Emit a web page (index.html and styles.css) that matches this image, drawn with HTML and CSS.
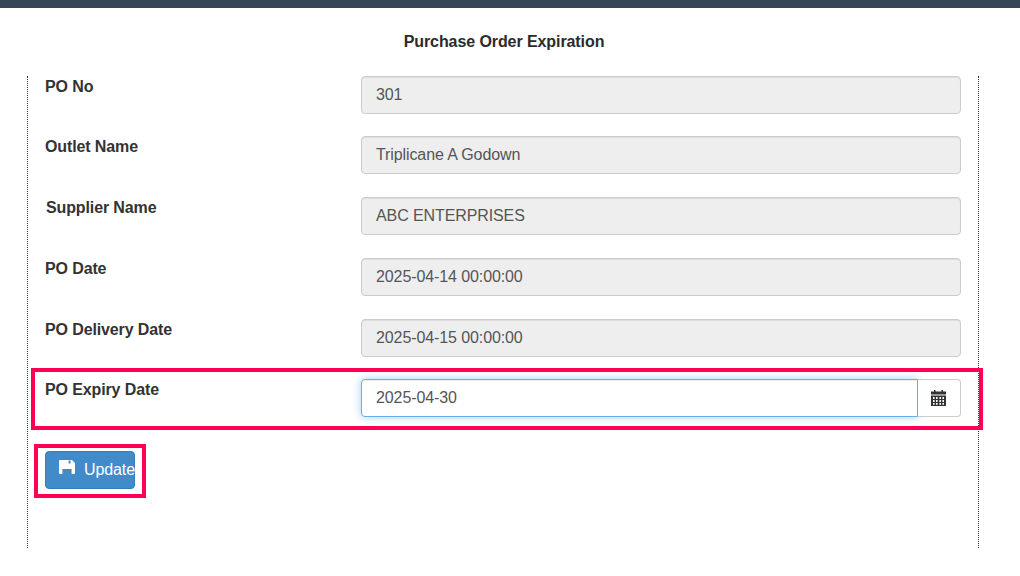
FILE: index.html
```html
<!DOCTYPE html>
<html lang="en">
<head>
<meta charset="utf-8">
<title>Purchase Order Expiration</title>
<link rel="stylesheet" href="styles.css">
</head>
<body>
<div class="topbar"></div>
<h1 class="title">Purchase Order Expiration</h1>
<form class="panel">
  <div class="row"><label class="label">PO No</label><input class="field" value="301" disabled></div>
  <div class="row"><label class="label">Outlet Name</label><input class="field" value="Triplicane A Godown" disabled></div>
  <div class="row"><label class="label label-shift">Supplier Name</label><input class="field" value="ABC ENTERPRISES" disabled></div>
  <div class="row"><label class="label">PO Date</label><input class="field" value="2025-04-14 00:00:00" disabled></div>
  <div class="row"><label class="label">PO Delivery Date</label><input class="field" value="2025-04-15 00:00:00" disabled></div>
  <div class="row">
    <label class="label">PO Expiry Date</label>
    <div class="group">
      <input class="field field-focus" value="2025-04-30">
      <span class="addon">
        <svg class="cal" viewBox="0 0 15 16" aria-hidden="true">
          <path fill="#333" d="M3 0h1.5v1.5h6V0H12v1.5h3v3H0V1.5h3z"/>
          <path fill="#333" fill-rule="evenodd" d="M0 5.5h15V16H0zM2 7v2h1.6V7zM5 7v2h1.6V7zM8.4 7v2H10V7zM11.4 7v2H13V7zM2 10v2h1.6v-2zM5 10v2h1.6v-2zM8.4 10v2H10v-2zM11.4 10v2H13v-2zM2 13v1.8h1.6V13zM5 13v1.8h1.6V13zM8.4 13v1.8H10V13zM11.4 13v1.8H13V13z"/>
        </svg>
      </span>
    </div>
  </div>
  <button type="button" class="btn">
    <svg class="save" viewBox="0 0 16 14" aria-hidden="true">
      <path fill="#fff" fill-rule="evenodd" d="M1 0h12l3 3v10a1 1 0 0 1-1 1H1a1 1 0 0 1-1-1V1a1 1 0 0 1 1-1zM9.6 0.6v3h2v-3zM3.4 14V9h9.2v5z"/>
    </svg>
    <span>Update</span>
  </button>
</form>
<div class="mark mark-row"></div>
<div class="mark mark-btn"></div>
</body>
</html>
```
FILE: styles.css
```css
* { box-sizing: border-box; }
html, body { margin: 0; padding: 0; }
body {
  position: relative;
  width: 1020px;
  height: 576px;
  overflow: hidden;
  background: #fff;
  font-family: "Liberation Sans", Arial, sans-serif;
  font-size: 16px;
  color: #333;
}
.topbar {
  height: 7.5px;
  background: #374558;
}
.title {
  margin: 0;
  height: 68px;
  padding-top: 25px;
  padding-right: 12px;
  text-align: center;
  font-size: 16px;
  line-height: 18px;
  font-weight: 700;
  letter-spacing: -0.08px;
  color: #2b2b2b;
}
.panel {
  margin-left: 27px;
  width: 952px;
  height: 472px;
  margin-top: 0.2px;
  border-left: 1px dotted #333;
  border-right: 1px dotted #333;
  padding-left: 17px;
  padding-right: 17px;
  display: flex;
  flex-direction: column;
  gap: 22.72px;
}
.row {
  display: flex;
  height: 38px;
  align-items: flex-start;
}
.label {
  width: 316px;
  flex: none;
  padding-top: 1px;
  font-weight: 700;
  line-height: 20px;
  letter-spacing: -0.12px;
  color: #333;
}
.label-shift { padding-left: 1px; }
.field {
  flex: 1;
  min-width: 0;
  height: 38px;
  padding: 0 14px;
  border: 1px solid #ccc;
  border-radius: 4px;
  background: #eee;
  font-family: "Liberation Sans", Arial, sans-serif;
  font-size: 16px;
  letter-spacing: -0.1px;
  color: #555;
  box-shadow: inset 0 1px 1px rgba(0, 0, 0, .075);
  opacity: 1;
}
.group {
  flex: 1;
  display: flex;
  height: 38px;
}
.field-focus {
  background: #fff;
  border-color: #66afe9;
  border-radius: 4px 0 0 4px;
  outline: none;
  box-shadow: inset 0 1px 1px rgba(0, 0, 0, .075), 0 0 8px rgba(102, 175, 233, .6);
}
.addon {
  width: 43px;
  flex: none;
  padding-right: 2px;
  display: flex;
  align-items: center;
  justify-content: center;
  border: 1px solid #ccc;
  border-left: 0;
  border-radius: 0 4px 4px 0;
  background: #fff;
}
.cal { width: 15px; height: 16px; display: block; }
.btn {
  align-self: flex-start;
  width: 90px;
  height: 38px;
  margin-top: 10.5px;
  padding: 0 0 0 13px;
  display: flex;
  align-items: center;
  gap: 9px;
  border: 1px solid #357ebd;
  border-radius: 4px;
  background: #428bca;
  color: #fff;
  font-family: "Liberation Sans", Arial, sans-serif;
  font-size: 16px;
  letter-spacing: -0.1px;
  white-space: nowrap;
}
.save { width: 16px; height: 14px; display: block; margin-top: -6px; flex: none; }
.mark {
  position: absolute;
  border: 4px solid #ff0055;
  pointer-events: none;
}
.mark-row { left: 31px; top: 368px; width: 952px; height: 62px; }
.mark-btn { left: 34px; top: 444px; width: 112px; height: 54px; }
```
